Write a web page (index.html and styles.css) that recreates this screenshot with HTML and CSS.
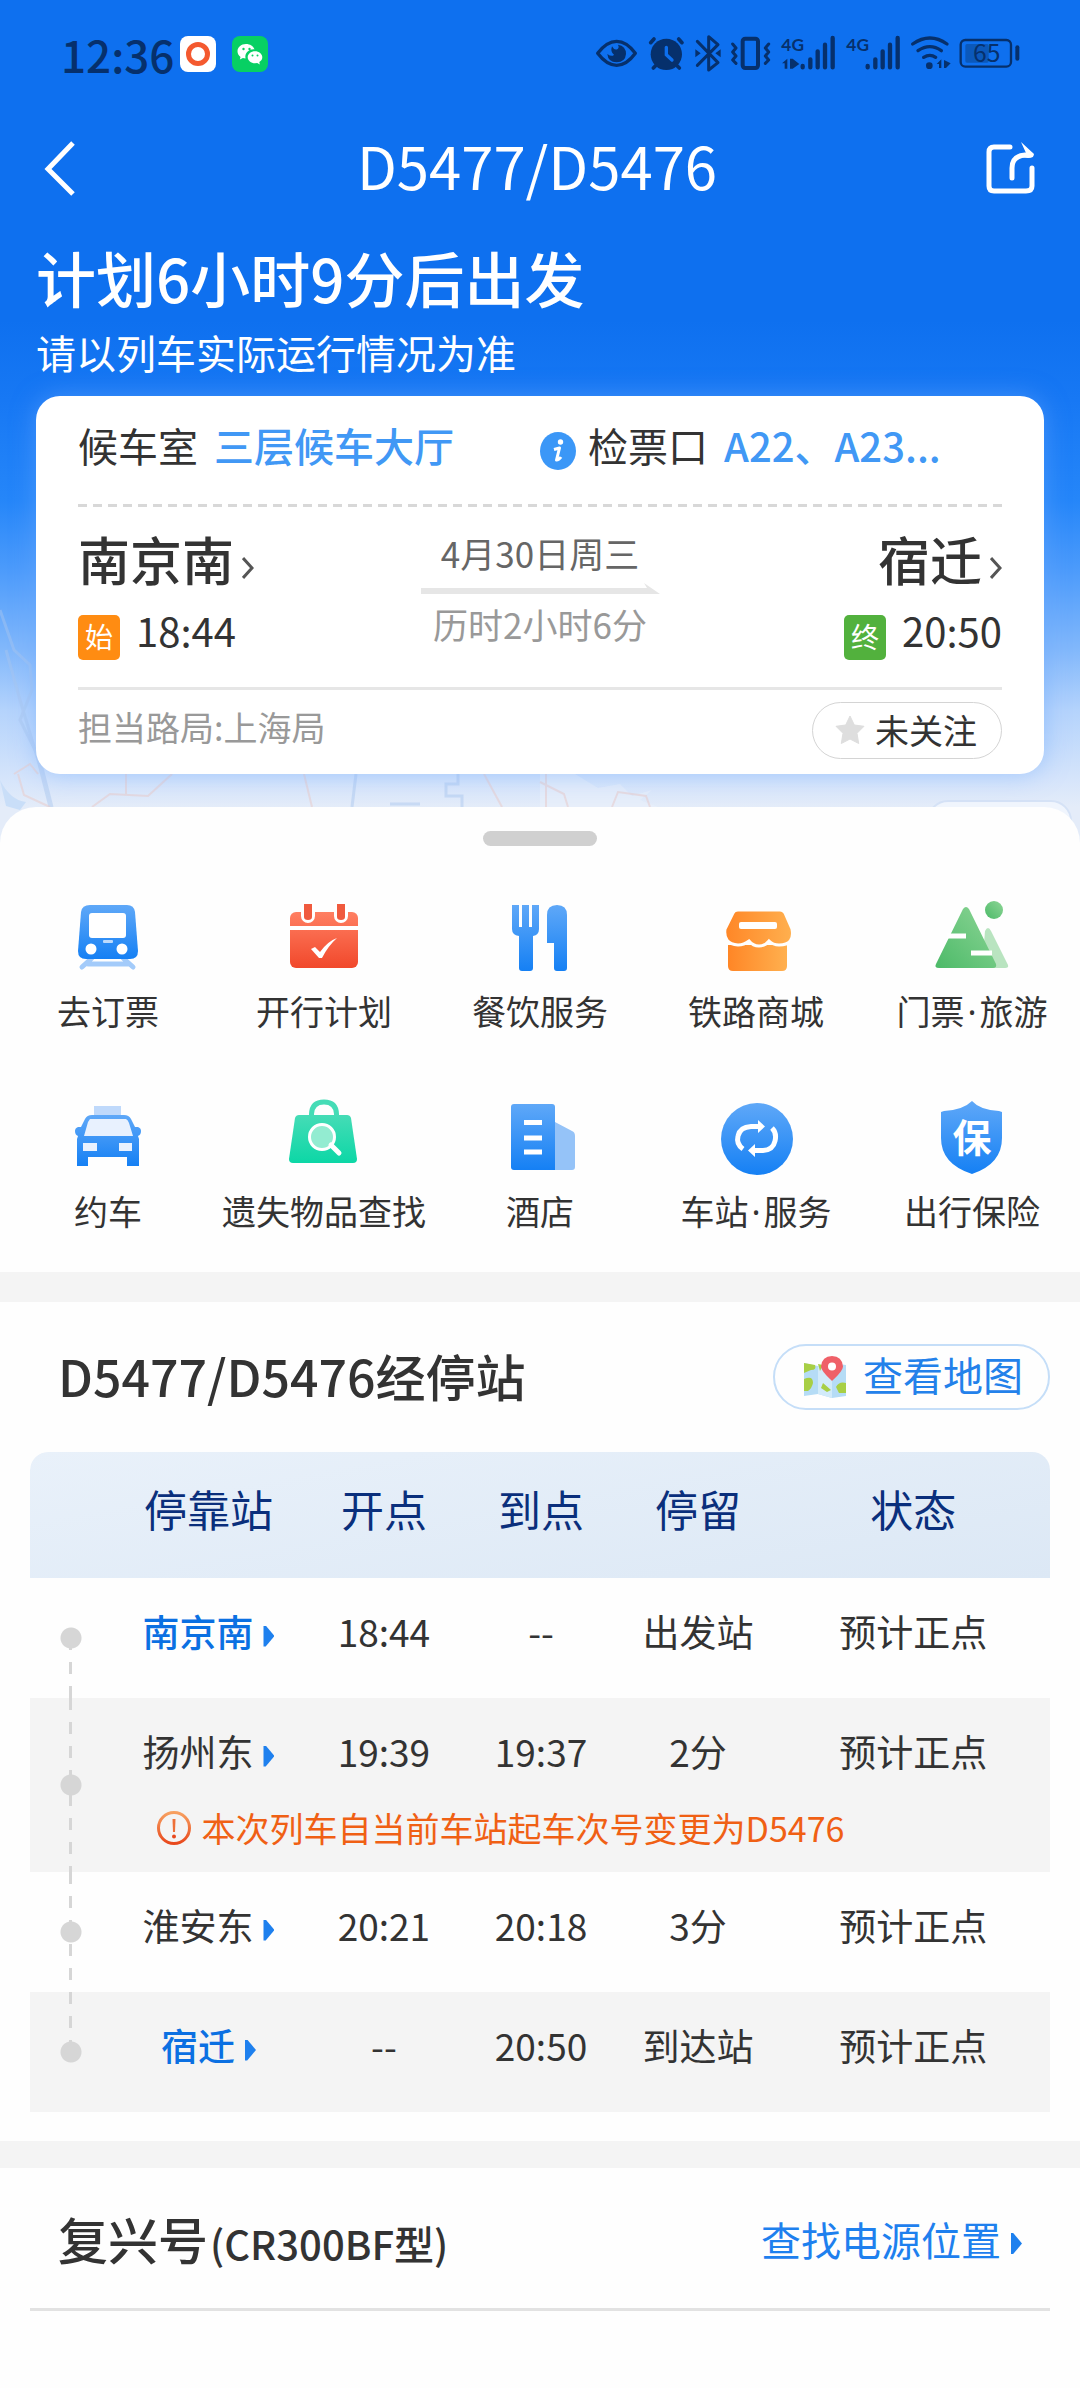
FILE: index.html
```html
<!DOCTYPE html>
<html lang="zh-CN">
<head>
<meta charset="utf-8">
<meta name="viewport" content="width=device-width, initial-scale=1">
<title>D5477/D5476</title>
<link rel="stylesheet" href="styles.css">
</head>
<body>
<svg class="defs" width="0" height="0" aria-hidden="true">
  <defs>
    <linearGradient id="blue" x1="0" y1="0" x2="0" y2="1"><stop offset="0" stop-color="#5fa8f8"/><stop offset="1" stop-color="#1580f4"/></linearGradient>
    <linearGradient id="red" x1="0" y1="0" x2="0" y2="1"><stop offset="0" stop-color="#ff7f62"/><stop offset="1" stop-color="#f1482b"/></linearGradient>
    <linearGradient id="orange" x1="0" y1="0" x2="1" y2="0"><stop offset="0" stop-color="#ff8626"/><stop offset="1" stop-color="#ffb04f"/></linearGradient>
    <linearGradient id="green" x1="1" y1="0" x2="0" y2="1"><stop offset="0" stop-color="#8dd596"/><stop offset="1" stop-color="#4cba68"/></linearGradient>
    <linearGradient id="mint" x1="0" y1="0" x2="0" y2="1"><stop offset="0" stop-color="#45dcb6"/><stop offset="1" stop-color="#0cd7a6"/></linearGradient>
    <linearGradient id="alert" x1="0" y1="0" x2="0" y2="1"><stop offset="0" stop-color="#f7a060"/><stop offset="1" stop-color="#e8481c"/></linearGradient>
  </defs>
</svg>

<header class="hero">
  <svg class="map" viewBox="0 0 1080 843" preserveAspectRatio="none" aria-hidden="true">
    <path d="M0 780 Q10 800 26 802 L20 810 6 806Z" fill="#c9def8"/>
    <path d="M575 774 L598 788 620 784 632 796 652 790 640 800 658 807 540 807 540 774Z" fill="#eaf0fa" opacity=".6"/>
    <g fill="none" stroke="#a9c6ee" stroke-width="3" opacity=".45">
      <path d="M0 610 L14 650 30 665 32 690 20 720 40 760 52 807"/>
      <path d="M6 650 L20 700 38 760 50 807"/><path d="M356 774 L352 807"/>
      <path d="M458 774 V784 H446 V796 H462 V807"/><path d="M390 804 H420"/>
    </g>
    <g fill="none" stroke="#e8cfd0" stroke-width="2" opacity=".6">
      <path d="M14 774 L30 764 38 774 M18 774 L24 795 50 807"/>
      <path d="M92 807 L110 794 148 796 172 774 M126 774 V796"/>
      <path d="M304 774 L312 807"/><path d="M484 774 L502 807"/>
      <path d="M546 774 V807 M540 782 L564 794 568 807"/><path d="M612 807 L618 792 646 796 650 807"/>
    </g>
    <rect x="928" y="801" width="143" height="42" rx="20" fill="#f0f5fd" stroke="#d5e2f6" stroke-width="2"/>
  </svg>

  <div class="status">
    <div class="status-left">
      <span class="clock">12:36</span>
      <svg width="36" height="36" viewBox="0 0 36 36" aria-hidden="true"><rect width="36" height="36" rx="8" fill="#fff"/><circle cx="18" cy="18" r="9.500" fill="none" stroke="#f4592f" stroke-width="5"/></svg>
      <svg width="36" height="36" viewBox="0 0 36 36" aria-hidden="true"><rect width="36" height="36" rx="8" fill="#07d063"/><path d="M14 8c-5 0-8.500 3.300-8.500 7.300 0 2.400 1.200 4.300 3 5.600l-.6 2.600 3-1.500 2.600.4c-1-6 4-9.500 9-9C21.500 10.200 18 8 14 8z" fill="#fff"/><path d="M23 15.300c-4 0-7.300 2.700-7.300 6s3.300 6 7.300 6l2.200-.3 2.600 1.400-.5-2.300c1.900-1.100 3-2.800 3-4.800 0-3.300-3.300-6-7.300-6z" fill="#fff"/><g fill="#07d063"><circle cx="11.500" cy="13" r="1.200"/><circle cx="17.500" cy="13" r="1.200"/><circle cx="20.500" cy="19.500" r="1"/><circle cx="25.500" cy="19.500" r="1"/></g></svg>
    </div>
    <svg class="status-icons" width="440" height="60" viewBox="0 0 1320 180" role="img" aria-label="手机状态">
      <g fill="none" stroke="#06306c" stroke-width="10" stroke-linecap="round" stroke-linejoin="round">
        <path d="M23 88 Q50 52 80 52 Q110 52 136 88 Q110 124 80 124 Q50 124 23 88Z"/>
        <path d="M182 56 L192 45 M276 56 L266 45 M196 126 L190 132 M262 126 L268 132" stroke-width="11"/>
        <path d="M322 52 L384 116 356 138 V38 L384 62 322 124" stroke-width="9"/>
        <rect x="458" y="44" width="46" height="88" rx="8" stroke-width="12"/>
        <path d="M428 60 L438 72 428 84 438 96 428 108 438 118 M536 60 L526 72 536 84 526 96 536 108 526 118" stroke-width="9"/>
        <path d="M638 126v4 M661 106v24 M683 82v48 M705 62v68 M728 42v88 M833 126v4 M856 106v24 M878 82v48 M900 62v68 M923 42v88" stroke-width="13"/>
        <path d="M968 60 Q1020 24 1071 60 M984 80 Q1020 56 1054 80 M1001 100 Q1020 88 1037 100"/>
        <rect x="1112" y="48" width="151" height="80" rx="14" stroke-width="7"/>
      </g>
      <g fill="#06306c">
        <path d="M66 67 Q74 82 84 74 Q88 68 84 62 Q108 66 108 90 Q106 114 80 115 Q54 114 52 90 Q66 100 72 92 Q60 84 66 67Z"/>
        <circle cx="229" cy="91" r="47"/>
        <path d="M316 76 L332 88 316 100Z M392 76 L376 88 392 100Z"/>
        <path d="M576 118 L592 104 V134 H584 V118Z M600 104 H608 L628 120 608 134 H600Z"/>
        <circle cx="1018" cy="125" r="10"/>
        <path d="M1040 120 L1054 106 V132 H1047 V120Z M1062 108 L1082 118 1068 132 H1062Z"/>
        <rect x="1276" y="64" width="12" height="46" rx="6"/>
      </g>
      <path d="M229 70 V92 L246 108" fill="none" stroke="#0d6fee" stroke-width="10" stroke-linecap="round"/>
      <rect x="1126" y="60" width="70" height="56" rx="5" fill="#0b58ba"/>
      <text x="574" y="80" class="net">4G</text><text x="769" y="80" class="net">4G</text>
      <text x="1190" y="115" class="battery">65</text>
    </svg>
  </div>

  <nav class="nav">
    <button class="icon-button" type="button" aria-label="返回"><svg width="54" height="60" viewBox="0 0 54 60"><path d="M37 4 L12 30 37 55" fill="none" stroke="#fff" stroke-width="5"/></svg></button>
    <h1 class="nav-title">D5477/D5476</h1>
    <button class="icon-button" type="button" aria-label="分享"><svg width="54" height="60" viewBox="0 0 54 60"><g fill="none" stroke="#fff" stroke-width="5" stroke-linecap="round" stroke-linejoin="round"><path d="M26 8 H10 Q5 8 5 13 V47 Q5 52 10 52 H42 Q48 52 48 47 V29"/><path d="M28 39 V29 Q28 17 41 16 H47"/></g><path d="M37 3 L50 15 Q49 19 44 19 L36 18 42 14Z" fill="#fff"/></svg></button>
  </nav>

  <div class="intro">
    <h2 class="countdown">计划6小时9分后出发</h2>
    <p class="hint">请以列车实际运行情况为准</p>
  </div>

  <section class="card">
    <div class="gates">
      <div class="gate"><span>候车室</span><a href="#hall">三层候车大厅</a></div>
      <div class="gate gate-check">
        <svg width="36" height="40" viewBox="0 0 36 40" aria-hidden="true"><ellipse cx="18" cy="20" rx="18" ry="19" fill="#3b97f7"/><circle cx="20.500" cy="11" r="2.700" fill="#fff"/><path d="M14 18.500 L19.500 17 16.500 29 Q19 29 21 26" fill="none" stroke="#fff" stroke-width="3" stroke-linejoin="round"/></svg>
        <span>检票口</span><a href="#gate">A22、A23...</a>
      </div>
    </div>
    <div class="journey">
      <div class="end">
        <a class="end-name" href="#nanjing">南京南<svg width="12" height="22" viewBox="0 0 12 22" aria-hidden="true"><path d="M1 1 L10 11 1 21" fill="none" stroke="#555" stroke-width="3"/></svg></a>
        <div class="end-time"><span class="tag tag-start">始</span><time>18:44</time></div>
      </div>
      <div class="trip">
        <span class="trip-date">4月30日周三</span>
        <svg class="trip-arrow" viewBox="0 0 239 11" aria-hidden="true"><path d="M0 5 H226 L223 0 239 11 H0Z" fill="#e6e6e6"/></svg>
        <span class="trip-length">历时2小时6分</span>
      </div>
      <div class="end end-right">
        <a class="end-name" href="#suqian">宿迁<svg width="12" height="22" viewBox="0 0 12 22" aria-hidden="true"><path d="M1 1 L10 11 1 21" fill="none" stroke="#555" stroke-width="3"/></svg></a>
        <div class="end-time"><span class="tag tag-final">终</span><time>20:50</time></div>
      </div>
    </div>
    <div class="card-foot">
      <span class="bureau">担当路局:上海局</span>
      <button class="follow" type="button"><svg width="30" height="30" viewBox="0 0 30 30" aria-hidden="true"><path d="M15 1 L19.300 10 29 11.300 22 18.300 23.700 28.500 15 24 6.300 28.500 8 18.300 1 11.300 10.700 10Z" fill="#dedede" stroke="#dedede" stroke-linejoin="round"/></svg>未关注</button>
    </div>
  </section>
</header>

<main class="sheet">
  <div class="handle"></div>
  <nav class="services">
    <a class="service" href="#book"><svg viewBox="0 0 80 80"><g fill="none" stroke="#a3cbfa" stroke-width="5" stroke-linecap="round"><path d="M24 60 L14 69 M55 60 L65 69 M20 66 H60"/></g><path d="M22 7 H59 Q66 7 67 14 L70 53 Q70 61 62 61 H18 Q10 61 10 53 L13 14 Q14 7 22 7Z" fill="url(#blue)"/><rect x="21" y="15" width="37" height="25" rx="3" fill="#fff"/><circle cx="23" cy="51" r="5.500" fill="#fff"/><circle cx="54" cy="51" r="5.500" fill="#fff"/><rect x="35" y="42" width="10" height="3" rx="1" fill="#bcdafc"/></svg>去订票</a>
    <a class="service" href="#plan"><svg viewBox="0 0 80 80"><rect x="6" y="14" width="68" height="56" rx="6" fill="url(#red)"/><path d="M6 30 H74" stroke="#fff" stroke-width="4"/><path d="M24 9 V18 M57 9 V18" stroke="#fff" stroke-width="14" stroke-linecap="round"/><path d="M20 6 H28 V19 Q28 22 24 22 Q20 22 20 19Z M53 6 H61 V19 Q61 22 57 22 Q53 22 53 19Z" fill="#f05a3e"/><path d="M27 51 L31 49 36 54 Q44 43 53 40 Q44 48 38 60 H35Z" fill="#fff"/></svg>开行计划</a>
    <a class="service" href="#food"><svg viewBox="0 0 80 80"><path d="M12 7 H19 V29 H22 V7 H29 V29 H32 V7 H39 V31 Q39 37 33 38 V70 Q33 73 30 73 H22 Q19 73 19 70 V38 Q12 37 12 31Z M47 17 Q47 7 57 7 Q67 7 67 17 V70 Q67 73 64 73 H57 Q54 73 54 70 V45 H47Z" fill="url(#blue)"/></svg>餐饮服务</a>
    <a class="service" href="#shop"><svg viewBox="0 0 80 80"><path d="M12 47 H71 V68 Q71 73 66 73 H17 Q12 73 12 68Z" fill="url(#orange)"/><path d="M22 12 H64 Q67 12 69 15 L76 31 Q79 47 63 47 Q57 47 53 43 Q49 48 43 48 Q37 48 33 43 Q28 47 22 47 Q7 46 9 31 L17 15 Q18 12 22 12Z" fill="url(#orange)" stroke="#fefefe" stroke-width="3"/><rect x="23" y="24" width="38" height="7" rx="2" fill="#fff"/></svg>铁路商城</a>
    <a class="service" href="#travel"><svg viewBox="0 0 80 80"><path d="M53 33 Q56 27 59 33 L76 67 Q77 70 73 70 H50Z" fill="#b9e4c0"/><path d="M31 11 Q34 7 37 11 L64 66 Q65 70 61 70 H7 Q2 70 4 66Z" fill="url(#green)"/><circle cx="62" cy="12" r="9" fill="url(#green)"/><path d="M15 38 H34 M39 55 H60" stroke="#fff" stroke-width="5"/></svg><span>门票<span class="dot">·</span>旅游</span></a>
    <a class="service" href="#taxi"><svg viewBox="0 0 80 80"><rect x="26" y="8" width="27" height="11" fill="#bfd9fb"/><path d="M24 17 H56 Q61 17 63 21 L67 29 H70 Q73 30 73 33 Q73 37 70 38 L71 41 V68 H59 V59 H20 V68 H9 V41 L10 38 Q7 37 7 33 Q7 30 10 29 H13 L17 21 Q19 17 24 17Z" fill="url(#blue)"/><path d="M22 21 H58 Q60 22 61 25 L65 38 H16 L20 24Z M15 45 H29 V53 H15Z M51 45 H64 V53 H51Z" fill="#e8f1fe"/></svg>约车</a>
    <a class="service" href="#lost"><svg viewBox="0 0 80 80"><path d="M27.500 19 V16 Q28 4 40 4 Q52 4 52.500 16 V19" fill="none" stroke="#45dcb6" stroke-width="5"/><path d="M15 17 H63 Q66 17 67 20 L73 61 Q73 65 69 65 H9 Q5 65 5 61 L11 20 Q12 17 15 17Z" fill="url(#mint)"/><circle cx="38" cy="39" r="12.500" fill="#93ecd1" stroke="#fff" stroke-width="3"/><path d="M47 47 L55 55" stroke="#fff" stroke-width="5" stroke-linecap="round"/></svg>遗失物品查找</a>
    <a class="service" href="#hotel"><svg viewBox="0 0 80 80"><path d="M55 24 L72 33 Q75 34 75 38 V69 Q75 72 72 72 H55Z" fill="#95c3f8"/><path d="M14 6 H52 Q55 6 55 9 V72 H14 Q11 72 11 69 V9 Q11 6 14 6Z" fill="url(#blue)"/><path d="M24 24.500 H42 M24 40 H42 M24 54 H42" stroke="#fff" stroke-width="5"/></svg>酒店</a>
    <a class="service" href="#station"><svg viewBox="0 0 80 80"><circle cx="41" cy="41" r="36" fill="url(#blue)"/><g fill="none" stroke="#fff" stroke-width="5"><path d="M27 51 Q20 46 22 38 Q24 29 35 28.500 H42"/><path d="M56 30 Q61 35 59 43 Q57 52 47 52.500 H38"/></g><path d="M42 22 L49 28.500 42 35Z M39 46 L32 52.500 39 59Z" fill="#fff"/></svg><span>车站<span class="dot">·</span>服务</span></a>
    <a class="service" href="#insurance"><svg viewBox="0 0 80 80"><path d="M40 3 Q48 12 67 13 L70 14 V40 Q70 66 40 76 Q9 66 9 40 V14 L12 13 Q31 12 40 3Z" fill="url(#blue)"/><text x="40" y="54" class="shield-text">保</text></svg>出行保险</a>
  </nav>
</main>

<section class="panel">
  <div class="panel-head">
    <h2 class="panel-title">D5477/D5476经停站</h2>
    <button class="map-button" type="button"><svg width="44" height="44" viewBox="0 0 44 44" aria-hidden="true"><path d="M1 8 L15 11 29 8 43 10 V41 L29 43 15 39 1 41Z" fill="#b5dcf6"/><path d="M15 11 L29 8 V43 L15 39Z" fill="#d2ebfa"/><path d="M1 8 L12 10 Q14 15 8 15 L1 18Z M1 24 Q10 20 10 28 Q9 33 5 36 L1 36Z M20 28 L28 35 24 37 18 33Z M43 28 Q36 26 33 32 L36 38 43 38Z M15 9 L20 10 17 16Z" fill="#a8cf45"/><path d="M29 26 Q18 16 18 11.500 Q19 1 29 1 Q39 1 40 11.500 Q40 16 29 26Z" fill="#ef6068"/><circle cx="29" cy="11.500" r="4" fill="#fff"/></svg><span>查看地图</span></button>
  </div>
  <table class="stops">
    <colgroup><col class="c-dot"><col class="c-station"><col class="c-time"><col class="c-time"><col class="c-time"><col class="c-state"></colgroup>
    <thead><tr><td></td><th scope="col">停靠站</th><th scope="col">开点</th><th scope="col">到点</th><th scope="col">停留</th><th scope="col">状态</th></tr></thead>
    <tbody>
      <tr><td class="line line-first"></td><td><a class="stop stop-end" href="#s1">南京南<i class="tri"></i></a></td><td>18:44</td><td>--</td><td>出发站</td><td>预计正点</td></tr>
      <tr class="shade with-note"><td class="line" rowspan="2"></td><td><a class="stop" href="#s2">扬州东<i class="tri"></i></a></td><td>19:39</td><td>19:37</td><td>2分</td><td>预计正点</td></tr>
      <tr class="shade note-row"><td colspan="5"><div class="note"><svg width="34" height="34" viewBox="0 0 34 34" aria-hidden="true"><circle cx="17" cy="17" r="15.500" fill="none" stroke="url(#alert)" stroke-width="3"/><path d="M15.500 8 H18.500 L18 21 H16Z" fill="#ee7038"/><circle cx="17" cy="25.500" r="2" fill="#e8481c"/></svg>本次列车自当前车站起车次号变更为D5476</div></td></tr>
      <tr><td class="line"></td><td><a class="stop" href="#s3">淮安东<i class="tri"></i></a></td><td>20:21</td><td>20:18</td><td>3分</td><td>预计正点</td></tr>
      <tr class="shade"><td class="line line-last"></td><td><a class="stop stop-end" href="#s4">宿迁<i class="tri"></i></a></td><td>--</td><td>20:50</td><td>到达站</td><td>预计正点</td></tr>
    </tbody>
  </table>
</section>

<section class="panel train">
  <div class="panel-head train-head">
    <h2 class="panel-title">复兴号<small>(CR300BF型)</small></h2>
    <a class="power" href="#power">查找电源位置<i class="tri"></i></a>
  </div>
</section>
</body>
</html>
```
FILE: styles.css
```css
* { box-sizing: border-box; }

body {
  margin: 0;
  background: #fefefe;
  color: #333;
  font-family: "Noto Sans CJK SC", "Noto Sans", sans-serif;
  font-size: 37px;
}

h1, h2, p { margin: 0; }
a { color: inherit; text-decoration: none; }
button { font: inherit; color: inherit; background: none; border: 0; padding: 0; }
svg { display: block; flex: none; }
.defs { position: absolute; }

/* Blue header */
.hero {
  position: relative;
  padding-bottom: 69px;
  background: linear-gradient(#0e70ef 0, #0e70ef 320px, #1778f4 400px, #2586f9 500px, #4c9bfb 570px, #82b8fb 650px, #b4d3fc 710px, #d6e5fb 780px, #e4ecf9 807px, #e4ecf9 843px);
}
.map { position: absolute; inset: 0; width: 100%; height: 100%; }
.status, .nav, .intro, .card { position: relative; }

.status {
  display: flex;
  justify-content: space-between;
  align-items: center;
  height: 108px;
  padding: 0 50px 0 61px;
  color: #06306c;
}
.status-left { display: flex; align-items: center; gap: 16px; }
.clock { font-size: 44px; line-height: 60px; font-weight: 500; margin-right: -10px; }
.net { font-size: 52px; font-weight: 700; fill: #06306c; font-family: "Open Sans", sans-serif; font-family: Lato, sans-serif; }
.battery { font-size: 74px; fill: #06306c; text-anchor: middle; }

.nav {
  display: flex;
  justify-content: space-between;
  align-items: center;
  height: 122px;
  padding: 0 42px 0 36px;
}
.nav-title { font-size: 58px; line-height: 72px; font-weight: 400; color: #fff; padding-bottom: 8px; }

.intro { padding: 9px 36px 16px; color: #fff; display: grid; gap: 9px; }
.countdown { font-size: 60px; line-height: 76px; font-weight: 500; }
.hint { font-size: 40px; line-height: 56px; }

/* Trip card */
.card {
  margin: 0 36px;
  padding: 0 42px;
  background: #fff;
  border-radius: 24px;
  box-shadow: 0 0 24px rgba(110, 170, 255, .5);
}
.gates {
  display: grid;
  grid-template-columns: 1fr 1fr;
  padding: 21px 0 34px;
  font-size: 40px;
  line-height: 56px;
  background: repeating-linear-gradient(90deg, #d8d8d8 0 9px, transparent 9px 15px) bottom / 100% 3px no-repeat;
}
.gate { display: flex; align-items: center; gap: 16px; white-space: nowrap; }
.gate a { color: #4198f5; font-weight: 500; }
.gate-check svg { margin: 12px -4px 0 0; }

.journey {
  display: grid;
  grid-template-columns: 1fr 239px 1fr;
  padding: 22px 0 27px;
  border-bottom: 3px solid #e6e6e6;
}
.end { display: flex; flex-direction: column; align-items: flex-start; gap: 23px; }
.end-right { align-items: flex-end; }
.end-name { display: flex; align-items: center; gap: 8px; font-size: 52px; line-height: 60px; font-weight: 500; }
.end-name svg { margin-top: 18px; }
.end-time { display: flex; align-items: flex-end; gap: 16px; }
.end-time time { font-size: 40px; line-height: 36px; padding-bottom: 12px; }
.tag {
  width: 42px;
  height: 45px;
  border-radius: 5px;
  color: #fff;
  font-size: 28px;
  line-height: 42px;
  text-align: center;
}
.tag-start { background: #ff8c12; }
.tag-final { background: #52b13d; }
.trip {
  display: flex;
  flex-direction: column;
  align-items: center;
  gap: 8px;
  padding-top: 2px;
  font-size: 35px;
  line-height: 44px;
  white-space: nowrap;
}
.trip-date { color: #666; }
.trip-length { color: #999; }
.trip-arrow { width: 100%; height: 11px; }

.card-foot {
  display: flex;
  justify-content: space-between;
  align-items: flex-start;
  padding: 12px 0 15px;
  font-size: 34px;
}
.bureau { color: #999; line-height: 50px; }
.follow {
  display: flex;
  align-items: center;
  gap: 10px;
  height: 57px;
  padding: 0 24px 2px 22px;
  border: 1px solid #d4d4d4;
  border-radius: 29px;
}

/* Service sheet */
.sheet {
  position: relative;
  margin-top: -36px;
  padding: 24px 0 39px;
  background: #fefefe;
  border-radius: 36px 36px 0 0;
  border-bottom: 30px solid #f4f4f4;
}
.handle { width: 114px; height: 15px; margin: 0 auto 52px; border-radius: 8px; background: #d0d0d0; }
.services { display: grid; grid-template-columns: repeat(5, 1fr); row-gap: 65px; }
.service {
  display: flex;
  flex-direction: column;
  align-items: center;
  gap: 11px;
  font-size: 34px;
  line-height: 44px;
  white-space: nowrap;
}
.service svg { width: 80px; height: 80px; }
.dot { padding: 0 3px; font-family: "Noto Sans", sans-serif; line-height: 1; }
.shield-text { font-size: 39px; font-weight: 700; fill: #fff; text-anchor: middle; }

/* Stops */
.panel { padding: 42px 30px 29px; border-bottom: 27px solid #f4f4f4; }
.panel-head {
  display: flex;
  justify-content: space-between;
  align-items: center;
  padding: 0 0 42px 28px;
}
.panel-title { font-size: 50px; line-height: 62px; padding-bottom: 4px; font-weight: 500; }
.panel-title small { font-size: 40px; margin-left: 2px; }
.map-button {
  display: flex;
  align-items: center;
  gap: 16px;
  height: 66px;
  padding: 0 25px 0 28px;
  border: 2px solid #c5def8;
  border-radius: 33px;
  color: #2381ea;
  font-size: 40px;
}
.map-button span { line-height: 56px; padding-bottom: 6px; }

.stops { width: 100%; table-layout: fixed; border-collapse: separate; border-spacing: 0; text-align: center; }
.c-dot { width: 8%; }
.c-station { width: 19%; }
.c-time { width: 15.400%; }
.stops td, .stops th { padding: 0; }
.stops thead { background: linear-gradient(170deg, #e9f1fa, #dce8f5); }
.stops thead tr { height: 126px; }
.stops th { font-size: 43px; font-weight: 400; line-height: 60px; padding-bottom: 14px; color: #0a2f7c; }
.stops tbody tr { height: 120px; }
.stops tbody td { line-height: 52px; padding-bottom: 14px; }
.stops .shade td { background-color: #f4f4f4; }
.stops tbody .with-note { height: 106px; }
.stops .with-note td { padding-bottom: 0; }
.stops tbody .note-row { height: 68px; }
.stops .note-row td { padding-bottom: 20px; }
.stops .line, .stops .shade .line {
  background-image:
    radial-gradient(circle, #d6d6d6 10px, transparent 11px),
    repeating-linear-gradient(#d6d6d6 0 12px, transparent 12px 24px);
  background-size: 22px 22px, 3px 100%;
  background-position: center;
  background-repeat: no-repeat;
}
.stops .line-first { background-size: 22px 22px, 3px 50%; background-position: center, center bottom; }
.stops .shade .line-last { background-size: 22px 22px, 3px 50%; background-position: center, center top; }
.stops thead td { border-radius: 18px 0 0; }
.stops { border-radius: 18px 18px 0 0; overflow: hidden; }
.stop { display: inline-flex; align-items: center; gap: 10px; }
.stop-end { color: #0b70e2; font-weight: 500; }
.tri { width: 11px; height: 21px; margin-top: 10px; background: #1e80ee; clip-path: polygon(0 0, 20% 0, 100% 50%, 20% 100%, 0 100%); }
.note {
  display: flex;
  align-items: center;
  gap: 11px;
  padding-left: 45px;
  color: #f06014;
  font-size: 34px;
  line-height: 44px;
  white-space: nowrap;
}

/* Train model */
.train { padding-top: 39px; border-bottom: 0; }
.train-head { padding-bottom: 30px; border-bottom: 3px solid #e2e2e2; }
.power { display: flex; align-items: center; gap: 10px; padding: 0 28px 8px 0; color: #1e80ee; font-size: 40px; line-height: 58px; }
```
